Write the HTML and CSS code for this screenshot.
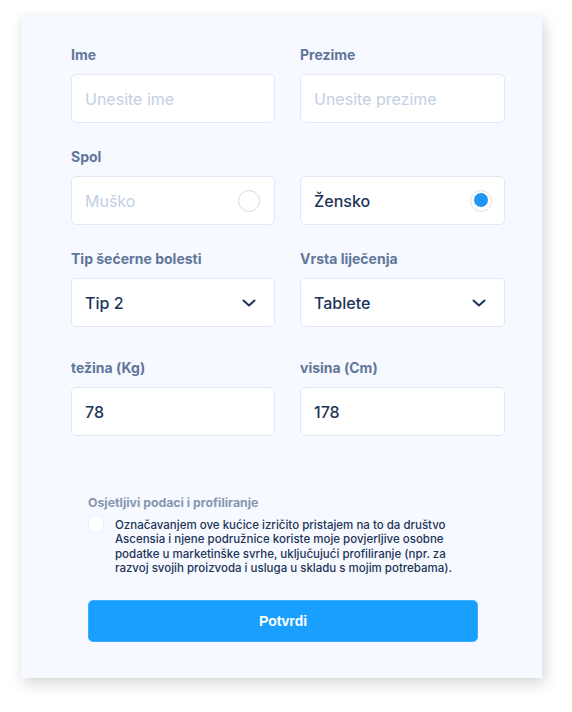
FILE: index.html
```html
<!DOCTYPE html>
<html lang="hr">
<head>
    <meta charset="UTF-8">
    <meta name="viewport" content="width=device-width, initial-scale=1.0">
    <title>Profil</title>
    <link rel="stylesheet" href="styles.css">
</head>
<body>
    <div class="card">
        <form class="form-grid">
            <div class="field">
                <label for="ime">Ime</label>
                <input class="input" type="text" id="ime" placeholder="Unesite ime">
            </div>
            <div class="field">
                <label for="prezime">Prezime</label>
                <input class="input" type="text" id="prezime" placeholder="Unesite prezime">
            </div>

            <div class="field">
                <label>Spol</label>
                <div class="input option">
                    <span class="muted">Muško</span>
                    <span class="radio"></span>
                </div>
            </div>
            <div class="field">
                <label class="blank">&nbsp;</label>
                <div class="input option">
                    <span>Žensko</span>
                    <span class="radio checked"></span>
                </div>
            </div>

            <div class="field">
                <label>Tip šećerne bolesti</label>
                <div class="input option">
                    <span>Tip 2</span>
                    <svg class="chevron" width="14" height="8" viewBox="0 0 14 8"><path d="M1.5 1.5 L7 6.5 L12.5 1.5" fill="none" stroke="#1c3457" stroke-width="2" stroke-linecap="round" stroke-linejoin="round"/></svg>
                </div>
            </div>
            <div class="field">
                <label>Vrsta liječenja</label>
                <div class="input option">
                    <span>Tablete</span>
                    <svg class="chevron" width="14" height="8" viewBox="0 0 14 8"><path d="M1.5 1.5 L7 6.5 L12.5 1.5" fill="none" stroke="#1c3457" stroke-width="2" stroke-linecap="round" stroke-linejoin="round"/></svg>
                </div>
            </div>

            <div class="field last-row">
                <label for="tezina">težina (Kg)</label>
                <input class="input" type="text" id="tezina" value="78">
            </div>
            <div class="field last-row">
                <label for="visina">visina (Cm)</label>
                <input class="input" type="text" id="visina" value="178">
            </div>
        </form>

        <section class="consent">
            <h3>Osjetljivi podaci i profiliranje</h3>
            <div class="consent-row">
                <span class="checkbox"></span>
                <p>Označavanjem ove kućice izričito pristajem na to da društvo Ascensia i njene podružnice koriste moje povjerljive osobne podatke u marketinške svrhe, uključujući profiliranje (npr. za razvoj svojih proizvoda i usluga u skladu s mojim potrebama).</p>
            </div>
            <button type="button" class="submit">Potvrdi</button>
        </section>
    </div>
</body>
</html>
```

FILE: styles.css
```css
html, body {
    margin: 0;
    background: #fff;
}
body {
    min-height: 712px;
    padding: 16px 0 0 21px;
    box-sizing: border-box;
    font-family: Inter, "Noto Sans", sans-serif;
    color: #1c3457;
}
.card {
    width: 521px;
    height: 662px;
    box-sizing: border-box;
    padding: 30px 37px 36px 50px;
    background: #f6f9ff;
    box-shadow: 3px 6px 14px rgba(0, 0, 0, 0.15), 0 0 10px rgba(0, 0, 0, 0.035);
}
.form-grid {
    display: grid;
    grid-template-columns: 204px 205px;
    column-gap: 25px;
    row-gap: 25px;
}
.field label {
    display: block;
    font-size: 14px;
    line-height: 17px;
    font-weight: 700;
    color: #62769a;
    margin-bottom: 11px;
}
.last-row { margin-top: 7px; }
.input {
    display: block;
    width: 100%;
    height: 49px;
    box-sizing: border-box;
    margin: 0;
    padding: 0 14px 0 13px;
    background: #fff;
    border: 1px solid #e2e9f5;
    border-radius: 5px;
    font-family: inherit;
    font-size: 16px;
    font-weight: 500;
    color: #1c3457;
    outline: none;
}
.input::placeholder {
    color: #c3cfe2;
    font-weight: 400;
}
.option {
    display: flex;
    align-items: center;
    justify-content: space-between;
}
.option .muted {
    color: #c3cfe2;
    font-weight: 400;
}
.radio {
    width: 22px;
    height: 22px;
    box-sizing: border-box;
    border: 1.5px solid #d2dbea;
    border-radius: 50%;
    position: relative;
}
.radio.checked {
    margin-right: -2px;
    border-color: #dbe3ef;
}
.radio.checked::after {
    content: "";
    position: absolute;
    left: 2.5px;
    top: 2.5px;
    width: 14px;
    height: 14px;
    border-radius: 50%;
    background: #2196f3;
}
.chevron { margin-right: 4px; }

.consent {
    margin: 59px 0 0 17px;
    width: 390px;
}
.consent h3 {
    margin: 0 0 6px;
    font-size: 12.3px;
    line-height: 15px;
    font-weight: 700;
    color: #8796b0;
}
.consent-row {
    display: flex;
    align-items: flex-start;
    gap: 11px;
}
.checkbox {
    flex: none;
    width: 16px;
    height: 16px;
    box-sizing: border-box;
    background: #fff;
    border: 1px solid #edf1f8;
    border-radius: 4px;
}
.consent p {
    margin: 2px 0 0;
    width: 340px;
    font-size: 11.5px;
    line-height: 14.3px;
    font-weight: 500;
    color: #1c3457;
}
.submit {
    display: block;
    width: 390px;
    height: 42px;
    margin-top: 25px;
    background: #199ffe;
    border: 1px solid #3fb0ff;
    border-radius: 5px;
    color: #fff;
    font-family: "Liberation Sans", Arial, sans-serif;
    font-size: 14px;
    font-weight: 700;
    cursor: pointer;
}
```
